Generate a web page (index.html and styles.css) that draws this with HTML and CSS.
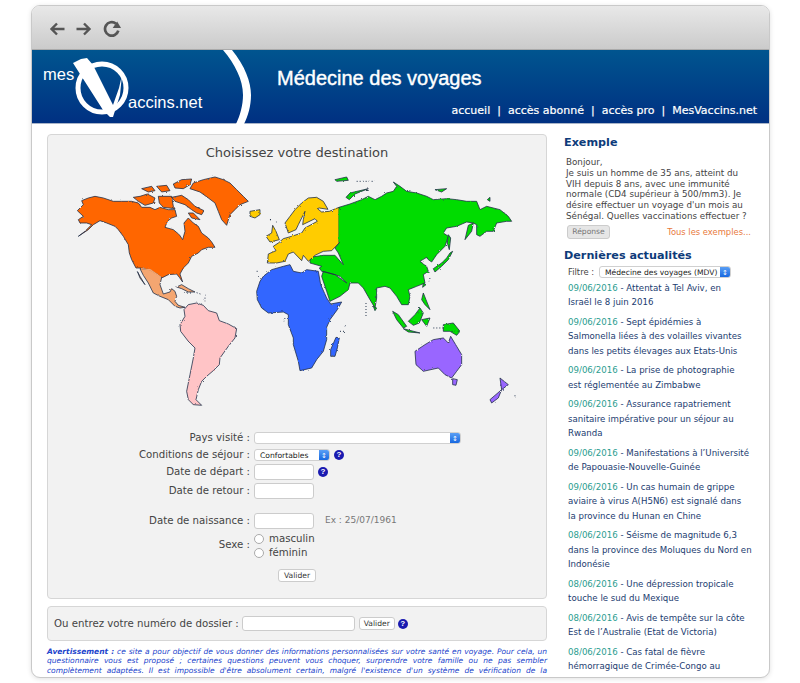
FILE: index.html
```html
<!DOCTYPE html>
<html lang="fr">
<head>
<meta charset="utf-8">
<title>MesVaccins.net - Médecine des voyages</title>
<link rel="stylesheet" href="styles.css">
</head>
<body>
<div class="window">
  <div class="toolbar">
    <svg class="tool-icon" viewBox="0 0 16 16"><path d="M15.5 8H3M8 2.5 2.5 8 8 13.5" /></svg>
    <svg class="tool-icon" viewBox="0 0 16 16"><path d="M.5 8H13M8 2.5 13.5 8 8 13.5" /></svg>
    <svg class="tool-icon reload" viewBox="0 0 16 16"><path d="M13.6 9.5A6 6 0 1 1 11.5 3.2" /><path class="solid" d="M8.6 7.2 16 7.2 12.6 1.4Z" /></svg>
  </div>
  <header class="site-header">
    <div class="logo">
      <span class="logo-mes">mes</span>
      <span class="logo-net">accins.net</span>
      <svg class="logo-mark" viewBox="0 0 100 74">
        <circle cx="33" cy="38" r="24" class="ring"/>
        <path class="blade" d="M4 13 12 9 18 8 24 15 44 55 50 38 53 25 51 45 44 67 41 67 34 60Z"/>
      </svg>
      <svg class="logo-arc" viewBox="0 0 40 74"><path d="M0 0H9C22 16 28 32 28 45 28 56 25 66 21 74H13C17 66 20 55 20 45 20 30 12 14 0 0Z"/></svg>
    </div>
    <div class="header-main">
      <h1 class="site-title">Médecine des voyages</h1>
      <nav class="site-nav"><a>accueil</a><span>|</span><a>accès abonné</a><span>|</span><a>accès pro</a><span>|</span><a>MesVaccins.net</a></nav>
    </div>
  </header>
  <div class="content">
    <main class="main-col">
      <section class="panel panel-dest">
        <h2 class="panel-title">Choisissez votre destination</h2>
        <svg class="world" viewBox="47 170 500 246">
          <defs>
            <filter id="rough" x="-5%" y="-5%" width="110%" height="110%">
              <feTurbulence type="fractalNoise" baseFrequency=".35" numOctaves="2" seed="4" result="n"/>
              <feDisplacementMap in="SourceGraphic" in2="n" scale="2.2"/>
            </filter>
          </defs>
          <g filter="url(#rough)">
          <g transform="translate(60 170) scale(.3333)">
            <path class="orange" d="M52 128 70 110 65 98 85 90 105 85 130 90 160 100 185 100 215 100 235 105 245 118 270 118 285 125 300 118 325 125 345 125 350 145 335 150 322 160 315 178 340 185 358 200 368 215 375 190 372 165 385 150 400 165 415 175 425 195 445 210 455 222 465 238 445 238 425 245 415 255 395 265 385 285 370 300 360 318 368 342 358 328 350 318 325 320 305 330 270 305 240 300 228 300 215 275 208 255 205 230 190 205 175 185 165 175 140 165 120 158 100 170 85 185 55 205 75 190 95 170 80 165 60 165 55 155 70 145Z"/>
            <path class="peach" d="M240 302 270 305 305 328 300 350 310 378 330 372 335 362 345 370 350 385 345 400 355 412 375 418 360 420 345 415 325 395 300 385 280 375 265 345 250 322Z"/>
            <path class="seam-peach" d="M243 302 270 305 303 328"/>
            <path class="peach" d="M232 310 240 330 255 350 240 325ZM350 357 365 350 385 362 405 372 385 372 365 362Z"/>
            <path class="orange" d="M390 62 400 45 430 35 465 27 490 35 510 45 530 65 550 85 565 100 540 110 525 125 510 140 500 172 485 155 475 130 465 105 445 90 420 72Z"/>
            <path class="orange" d="M340 48 365 35 395 33 390 50 370 62 345 60ZM335 88 365 82 385 95 405 115 432 128 425 140 410 135 395 125 375 110 345 100ZM240 85 262 78 285 90 280 105 255 112 235 100 220 88ZM245 62 275 55 285 68 265 72ZM290 55 320 52 330 68 305 72ZM295 85 335 85 340 115 345 122 310 118 298 105ZM385 135 400 135 420 155 395 150Z"/>
            <path class="yellow" d="M570 130 600 125 600 140 585 150 570 145Z"/>
            <path class="pink" d="M385 410 410 405 430 412 445 428 470 435 478 458 505 468 530 482 525 510 505 535 480 570 478 590 460 608 440 625 425 640 415 665 408 695 425 712 400 710 385 695 380 670 390 620 400 570 405 540 385 520 362 490 360 470 375 445 372 425Z"/>
            <path class="fine" d="M372 375h22M410 374l14 5M435 380v20M595 325l8 8M590 310h3M630 155h3M648 162h2"/>
          </g>
          <g transform="translate(260 170) scale(.3333)">
            <path class="green" d="M237 118 270 108 305 95 325 85 345 95 365 85 380 75 400 70 410 55 400 42 420 55 440 70 470 75 500 85 520 95 560 92 590 95 620 100 650 100 660 125 680 115 720 125 745 145 755 160 740 160 710 165 700 190 680 190 660 205 650 200 650 170 640 165 620 162 590 175 560 180 550 195 565 205 555 235 530 260 515 282 505 275 500 268 480 280 500 295 505 310 490 320 495 345 470 355 445 365 450 385 445 410 425 410 410 385 390 360 375 355 350 360 350 390 345 420 330 395 310 360 295 345 270 345 265 365 240 385 210 400 200 370 185 325 190 310 225 320 260 345 240 325 225 320 185 310 178 300 185 295 150 285 150 268 190 262 225 262 245 285 250 290 235 255 225 240 237 225Z"/>
            <path class="yellow" d="M237 118 208 130 185 132 172 122 178 120 204 124 190 100 170 88 145 90 125 105 105 125 90 145 75 165 85 195 108 185 115 170 125 150 135 130 130 155 128 170 165 152 172 160 150 172 135 180 125 195 95 205 70 212 55 225 40 235 48 248 25 258 22 285 50 285 75 280 85 258 100 252 125 278 130 262 145 280 165 262 190 250 215 248 237 225Z"/>
            <path class="seam-green" d="M238 122V222"/>
            <path class="yellow" d="M38 172 48 190 58 215 30 222 18 205 35 195Z"/>
            <path class="green" d="M225 35 260 27 265 37 230 40ZM258 88 270 75 325 62 285 78 268 95ZM525 65 560 62 545 72ZM682 95 690 88 690 100ZM615 215 625 172 640 165 635 190ZM565 200 572 210 568 245 562 225ZM570 255 578 250 565 275 545 295 525 312 520 302 545 285 560 270ZM398 430 415 440 440 475 430 480 410 455ZM445 460 465 440 480 420 490 435 478 465 460 472ZM430 482 480 495 445 492ZM490 375 498 395 510 425 495 410 485 395ZM485 455 510 450 500 475ZM550 470 580 465 600 490 590 502 570 490 550 490ZM490 345 498 350 488 358ZM340 415 350 420 345 428Z"/>
            <path class="blue" d="M-10 370 0 340 10 325 35 305 70 295 90 290 100 310 125 315 140 305 175 310 182 350 200 390 212 408 245 402 232 425 210 455 200 478 200 515 190 550 170 575 155 600 120 608 115 580 100 530 100 510 85 470 85 440 70 432 25 435 5 420-8 395Z"/>
            <path class="blue" d="M228 508 238 510 232 540 225 565 212 565 212 545Z"/>
            <path class="purple" d="M465 550 495 530 520 515 550 510 565 525 572 505 590 535 605 560 605 590 590 610 575 630 555 620 535 600 490 610 468 590Z"/>
            <path class="purple" d="M578 632 592 635 588 652 578 650ZM720 630 745 650 725 665ZM725 665 715 690 695 705 690 695Z"/>
            <path class="fine" d="M318 405v45M290 40h55M75 450l-3 10M240 490h15M255 475l3-5M30 155h3M765 682v4M510 330l-3 10M520 480h30M575 490h25"/>
          </g>
          </g>
        </svg>
        <form class="dest-form">
          <label class="field-label">Pays visité :</label>
          <div class="field-row"><span class="select select-wide"><i class="select-cap"></i></span></div>
          <label class="field-label">Conditions de séjour :</label>
          <div class="field-row"><span class="select select-small">Confortables<i class="select-cap"></i></span><span class="help">?</span></div>
          <label class="field-label tall pull">Date de départ :</label>
          <div class="field-row tall pull"><input class="text-input" type="text"><span class="help">?</span></div>
          <label class="field-label tall">Date de retour :</label>
          <div class="field-row tall"><input class="text-input" type="text"></div>
          <label class="field-label tall gap-top">Date de naissance :</label>
          <div class="field-row tall gap-top"><input class="text-input" type="text"><span class="hint">Ex : 25/07/1961</span></div>
          <label class="field-label sex-label">Sexe :</label>
          <div class="radios">
            <span class="radio-row"><i class="radio"></i>masculin</span>
            <span class="radio-row"><i class="radio"></i>féminin</span>
          </div>
          <div class="submit-row"><button class="btn" type="button">Valider</button></div>
        </form>
      </section>
      <section class="panel panel-file">
        <span class="file-label">Ou entrez votre numéro de dossier :</span>
        <input class="text-input file-input" type="text">
        <button class="btn" type="button">Valider</button>
        <span class="help">?</span>
      </section>
      <p class="warning"><b>Avertissement :</b> ce site a pour objectif de vous donner des informations personnalisées sur votre santé en voyage. Pour cela, un<br>questionnaire vous est proposé ; certaines questions peuvent vous choquer, surprendre votre famille ou ne pas sembler<br>complètement adaptées. Il est impossible d'être absolument certain, malgré l'existence d'un système de vérification de la</p>
    </main>
    <aside class="side-col">
      <h3 class="side-title">Exemple</h3>
      <p class="example">Bonjour,<br>Je suis un homme de 35 ans, atteint du<br>VIH depuis 8 ans, avec une immunité<br>normale (CD4 supérieur à 500/mm3). Je<br>désire effectuer un voyage d'un mois au<br>Sénégal. Quelles vaccinations effectuer ?</p>
      <div class="example-actions"><button class="btn btn-grey" type="button">Réponse</button><a class="all-link">Tous les exemples...</a></div>
      <h3 class="side-title news-title">Dernières actualités</h3>
      <div class="filter"><span>Filtre :</span><span class="select select-filter">Médecine des voyages (MDV)<i class="select-cap"></i></span></div>
      <ul class="news">
        <li><em>09/06/2016</em> - Attentat à Tel Aviv, en<br>Israël le 8 juin 2016</li>
        <li><em>09/06/2016</em> - Sept épidémies à<br>Salmonella liées à des volailles vivantes<br>dans les petits élevages aux Etats-Unis</li>
        <li><em>09/06/2016</em> - La prise de photographie<br>est réglementée au Zimbabwe</li>
        <li><em>09/06/2016</em> - Assurance rapatriement<br>sanitaire impérative pour un séjour au<br>Rwanda</li>
        <li><em>09/06/2016</em> - Manifestations à l’Université<br>de Papouasie-Nouvelle-Guinée</li>
        <li><em>09/06/2016</em> - Un cas humain de grippe<br>aviaire à virus A(H5N6) est signalé dans<br>la province du Hunan en Chine</li>
        <li><em>08/06/2016</em> - Séisme de magnitude 6,3<br>dans la province des Moluques du Nord en<br>Indonésie</li>
        <li><em>08/06/2016</em> - Une dépression tropicale<br>touche le sud du Mexique</li>
        <li><em>08/06/2016</em> - Avis de tempête sur la côte<br>Est de l’Australie (Etat de Victoria)</li>
        <li><em>08/06/2016</em> - Cas fatal de fièvre<br>hémorragique de Crimée-Congo au</li>
      </ul>
    </aside>
  </div>
</div>
</body>
</html>
```
FILE: styles.css
```css
* { box-sizing: border-box; }
html, body { margin: 0; height: 100%; background: #fff; overflow: hidden; }
body { padding: 5px 30px 0 31px; font-family: "DejaVu Sans", Verdana, sans-serif; }
.window {
  height: 673px; width: 739px; overflow: hidden; display: flex; flex-direction: column;
  background: #fff; border: 1px solid #c9c9c9; border-radius: 9px;
  box-shadow: 0 1px 5px rgba(0,0,0,.12);
}
.toolbar {
  height: 44px; flex: none; display: flex; align-items: center; gap: 11px; padding: 2px 0 0 17px;
  background: linear-gradient(#e8e8e8, #cbcbcb); border-bottom: 1px solid #aaa;
}
.tool-icon { width: 16px; height: 16px; fill: none; stroke: #555; stroke-width: 2.4; }
.tool-icon .solid { fill: #555; stroke: none; }
.reload { width: 18px; height: 18px; }

.site-header {
  height: 74px; flex: none; display: flex; color: #fff;
  background: linear-gradient(#00558f, #003082); border-bottom: 1px solid #a8b4c8;
}
.logo { position: relative; width: 245px; flex: none; }
.logo-mes, .logo-net { position: absolute; font: 16.5px "Liberation Sans", Arial, sans-serif; color: #fff; }
.logo-mes { left: 11px; top: 15px; }
.logo-net { left: 96px; top: 43px; }
.logo-mark { position: absolute; left: 37px; top: 0; width: 100px; height: 74px; }
.ring { fill: none; stroke: #fff; stroke-width: 5; }
.blade { fill: #fff; }
.logo-arc { position: absolute; left: 191px; top: 0; width: 40px; height: 74px; fill: #fff; }
.header-main { flex: 1; display: flex; flex-direction: column; justify-content: space-between; padding: 15px 12px 5px 0; }
.site-title { margin: 0; font: 400 20px/26px "Liberation Sans", Arial, sans-serif; -webkit-text-stroke: .4px #fff; }
.site-nav { display: flex; justify-content: flex-end; gap: 7px; font-size: 11px; line-height: 14px; -webkit-text-stroke: .2px #fff; }

.content { flex: 1; min-height: 0; display: flex; padding: 10px 0 0 15px; gap: 17px; }
.main-col { width: 500px; flex: none; }
.side-col { width: 195px; flex: none; padding-top: 1px; }

.panel { background: #f2f2f2; border: 1px solid #d6d6d6; border-radius: 4px; }
.panel-dest { height: 465px; padding: 10px 0 0; }
.panel-title { margin: 0 0 7px; text-align: center; font-weight: 400; font-size: 13px; line-height: 16px; color: #444; }
.world { display: block; width: 500px; height: 246px; margin-left: -1px; }
.world path { stroke: #223049; stroke-width: 2.4; stroke-linejoin: round; }
.world .fine { fill: none; stroke-width: 3; stroke-dasharray: 3 6; }
.world .seam-peach { fill: none; stroke: #f4a671; stroke-width: 4; }
.world .seam-green { fill: none; stroke: #00dc00; stroke-width: 4; }
.orange { fill: #ff6600; }
.peach { fill: #f4a671; }
.pink { fill: #ffc4c6; }
.yellow { fill: #ffcc00; }
.green { fill: #00dc00; }
.blue { fill: #3366ff; }
.purple { fill: #9966ff; }

.dest-form {
  display: grid; grid-template-columns: 202px 1fr; column-gap: 4px; margin-top: 15px;
  font-size: 10.2px; color: #444; grid-auto-rows: min-content;
}
.field-label { text-align: right; line-height: 17px; height: 17px; }
.field-label.tall, .field-row.tall { height: 19px; line-height: 19px; }
.pull { margin-top: -1px; }
.gap-top { margin-top: 11px; }
.field-row { display: flex; align-items: center; gap: 4px; height: 17px; }
.select {
  position: relative; display: block; height: 12px; line-height: 12px; padding-left: 5px; font-size: 7.6px; color: #222;
  background: #fff; border: 1px solid #d0d0d0; border-radius: 3px; white-space: nowrap; overflow: hidden;
}
.select-wide { width: 207px; }
.select-small { width: 76px; }
.select-filter { width: 132px; padding-left: 5px; }
.select-cap {
  position: absolute; right: 0; top: 0; bottom: 0; width: 10px;
  background: linear-gradient(#5a9ff5, #1768e0);
}
.select-cap::after { content: "\2195"; position: absolute; inset: 0; text-align: center; color: #fff; font-style: normal; font-size: 7px; }
.help {
  width: 10px; height: 10px; flex: none; border-radius: 50%; background: #1a1ab0; color: #fff;
  font: 700 8px/10px "Liberation Sans", Arial, sans-serif; text-align: center;
}
.text-input { display: block; width: 60px; height: 16px; padding: 0; background: #fff; border: 1px solid #ccc; border-radius: 3px; }
.hint { margin-left: 7px; font-size: 9px; color: #777; }
.sex-label { line-height: 28px; height: 28px; margin-top: 1px; }
.radios { display: flex; flex-direction: column; margin-top: 2px; }
.radio-row { display: flex; align-items: center; gap: 5px; height: 14px; line-height: 14px; }
.radio { width: 10px; height: 10px; background: #fff; border: 1px solid #aaa; border-radius: 50%; }
.submit-row { grid-column: 1 / -1; display: flex; justify-content: center; margin-top: 9px; }
.btn { height: 13px; padding: 0 5px; font: 7.6px/11px "DejaVu Sans", Verdana, sans-serif; color: #333; background: #fff; border: 1px solid #ccc; border-radius: 3px; }

.panel-file { height: 35px; margin-top: 7px; display: flex; align-items: center; padding: 0 6px; font-size: 10.2px; color: #444; }
.file-label { margin-right: 3px; }
.file-input { width: 113px; height: 15px; margin-right: 4px; }
.panel-file .btn { width: 36px; padding: 0; margin-right: 3px; }
.warning { margin: 6px 0 0; font-size: 7.5px; line-height: 9.3px; font-style: italic; color: #2244cc; text-align: justify; text-align-last: justify; }

.side-title { margin: 0; font-size: 11.2px; line-height: 16px; font-weight: 700; color: #0d3b7a; }
.example { margin: 6px 0 0 2px; font-size: 8.75px; line-height: 10.8px; color: #444; white-space: nowrap; }
.example-actions { display: flex; justify-content: space-between; align-items: center; margin: 3px 8px 0 3px; }
.btn-grey { height: 14px; width: 43px; padding: 0; color: #777; background: #e6e6e6; }
.all-link { font-size: 8.4px; color: #e87a3c; }
.news-title { margin-top: 9px; }
.filter { display: flex; align-items: center; gap: 5px; margin: 2px 0 0 4px; font-size: 8.4px; color: #444; }
.news { list-style: none; margin: 3px 0 0 4px; padding: 0; font-size: 8.64px; line-height: 14.5px; color: #1b3c70; white-space: nowrap; }
.news li { margin-bottom: 5px; }
.news em { font-style: normal; color: #2a9d8f; }
```
